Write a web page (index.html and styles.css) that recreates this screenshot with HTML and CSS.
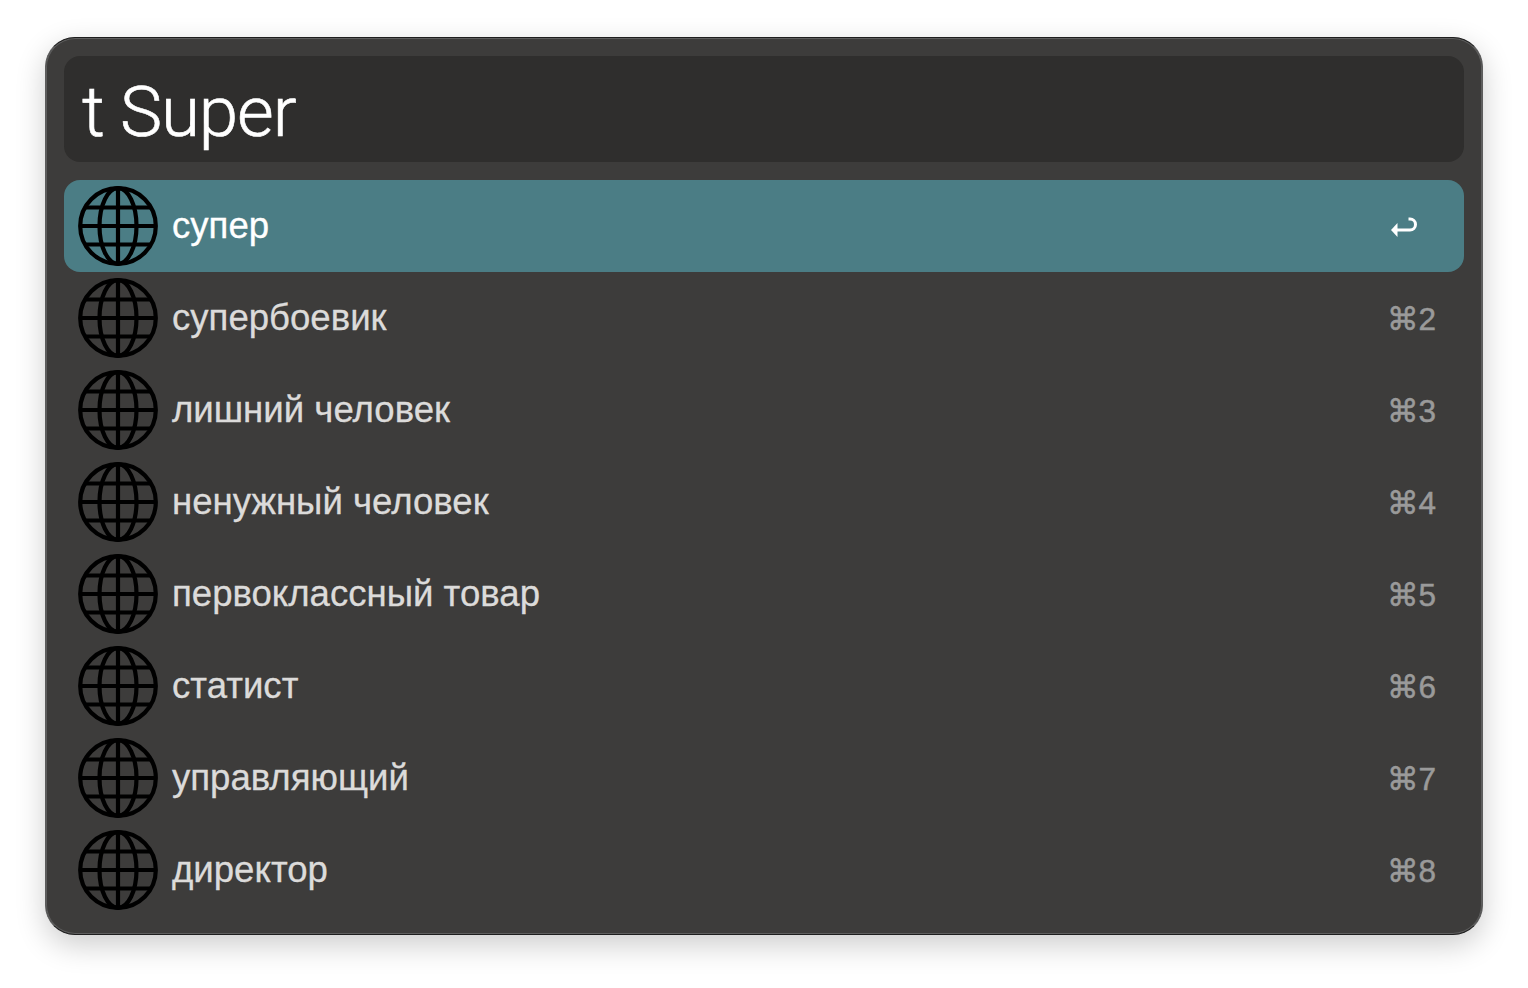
FILE: index.html
```html
<!DOCTYPE html>
<html lang="en">
<head>
    <meta charset="UTF-8" />
    <title>t Super</title>
    <link rel="stylesheet" href="styles.css">
</head>
<body>

<svg class="defs" width="0" height="0">
    <symbol id="globe" viewBox="0 0 80 80">
        <g fill="none" stroke="#000" stroke-width="4.2">
            <circle cx="40" cy="40" r="37.8" />
            <ellipse cx="40" cy="40" rx="18.5" ry="37.8" />
            <path d="M40 2.2V77.8M2.2 40H77.8M6.8 21.5H73.2M6.8 58.5H73.2" />
        </g>
    </symbol>
</svg>

<main class="window">
    <div class="search">t Super</div>

    <ul class="results">
        <li class="row selected">
            <svg class="globe"><use href="#globe" /></svg>
            <span class="title">супер</span>
            <svg class="enter" viewBox="0 0 28 22">
                <path d="M7 15H20A5.5 5.5 0 0 0 20 4H18.5" fill="none" stroke="#fff" stroke-width="3" />
                <path d="M1 15L7.5 8V22Z" fill="#fff" />
            </svg>
        </li>
        <li class="row">
            <svg class="globe"><use href="#globe" /></svg>
            <span class="title">супербоевик</span>
            <span class="key">⌘2</span>
        </li>
        <li class="row">
            <svg class="globe"><use href="#globe" /></svg>
            <span class="title">лишний человек</span>
            <span class="key">⌘3</span>
        </li>
        <li class="row">
            <svg class="globe"><use href="#globe" /></svg>
            <span class="title">ненужный человек</span>
            <span class="key">⌘4</span>
        </li>
        <li class="row">
            <svg class="globe"><use href="#globe" /></svg>
            <span class="title">первоклассный товар</span>
            <span class="key">⌘5</span>
        </li>
        <li class="row">
            <svg class="globe"><use href="#globe" /></svg>
            <span class="title">статист</span>
            <span class="key">⌘6</span>
        </li>
        <li class="row">
            <svg class="globe"><use href="#globe" /></svg>
            <span class="title">управляющий</span>
            <span class="key">⌘7</span>
        </li>
        <li class="row">
            <svg class="globe"><use href="#globe" /></svg>
            <span class="title">директор</span>
            <span class="key">⌘8</span>
        </li>
    </ul>
</main>

</body>
</html>
```

FILE: styles.css
```css
html, body {
    height: 100%;
}
body {
    margin: 0;
    padding: 37px 45px 0;
    box-sizing: border-box;
    background: #fff;
    font-family: "Liberation Sans", "DejaVu Sans", sans-serif;
    overflow: hidden;
}
.defs {
    display: block;
    height: 0;
}
.window {
    width: 1438px;
    height: 898px;
    box-sizing: border-box;
    padding: 18px 18px 0;
    background: #3d3c3b;
    border: 1px solid #5c5c5c;
    border-top-color: #1e1e1e;
    border-bottom-color: #1e1e1e;
    border-radius: 30px;
    box-shadow: inset 0 0 0 1px #5e5e5e, 0 10px 30px rgba(0, 0, 0, 0.2);
}
.search {
    height: 106px;
    box-sizing: border-box;
    padding-left: 18px;
    background: #2f2e2d;
    border-radius: 16px;
    color: #fff;
    font-family: Roboto, sans-serif;
    font-weight: 300;
    font-size: 71px;
    letter-spacing: -1.1px;
    line-height: 112px;
    -webkit-text-stroke: 0.6px #fff;
}
.results {
    list-style: none;
    margin: 18px 0 0;
    padding: 0;
}
.row {
    display: flex;
    align-items: center;
    height: 92px;
    padding-left: 14px;
    padding-right: 28px;
    border-radius: 16px;
    color: #dcdbda;
    font-size: 36.6px;
}
.selected {
    background: #4b7d85;
    color: #fff;
}
.globe {
    width: 80px;
    height: 80px;
    flex: none;
}
.title {
    flex: 1;
    margin-left: 14px;
    -webkit-text-stroke: 0.3px currentColor;
}
.key {
    margin-top: 2px;
    color: #9a9a9a;
    font-size: 31.5px;
    -webkit-text-stroke: 0.5px #9a9a9a;
}
.enter {
    width: 28px;
    height: 22px;
    margin-right: 18px;
    overflow: visible;
}
```
